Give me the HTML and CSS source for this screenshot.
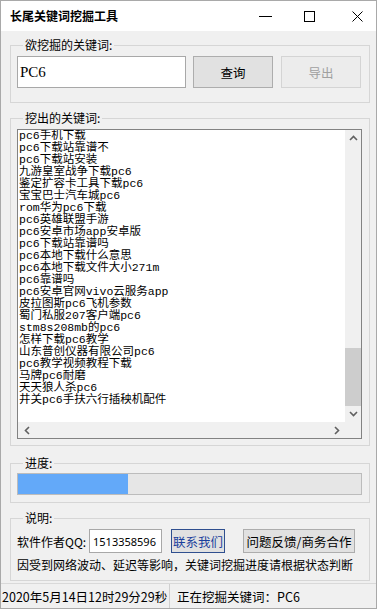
FILE: index.html
```html
<!DOCTYPE html>
<html lang="zh-CN">
<head>
<meta charset="utf-8">
<title>长尾关键词挖掘工具</title>
<link rel="stylesheet" href="styles.css">
</head>
<body>
<div class="window">
  <div class="titlebar">
    <span class="title">长尾关键词挖掘工具</span>
    <div class="controls">
      <svg class="ic-min" width="13" height="10" viewBox="0 0 13 10"><path d="M0 5.5H13" stroke="#000" stroke-width="1"/></svg>
      <svg class="ic-max" width="11" height="11" viewBox="0 0 11 11"><rect x="0.5" y="0.5" width="10" height="10" fill="none" stroke="#000" stroke-width="1"/></svg>
      <svg class="ic-close" width="11" height="11" viewBox="0 0 11 11"><path d="M0.5 0.5L10.5 10.5M10.5 0.5L0.5 10.5" stroke="#000" stroke-width="1"/></svg>
    </div>
  </div>

  <div class="content">
    <fieldset class="group g-query">
      <legend>欲挖掘的关键词:</legend>
      <div class="query-row">
        <div class="kw">PC6</div>
        <button class="btn btn-query">查询</button>
        <button class="btn btn-disabled">导出</button>
      </div>
    </fieldset>

    <fieldset class="group g-list">
      <legend>挖出的关键词:</legend>
      <div class="listbox">
        <div class="items">
          <div>pc6手机下载</div>
          <div>pc6下载站靠谱不</div>
          <div>pc6下载站安装</div>
          <div>九游皇室战争下载pc6</div>
          <div>鉴定扩容卡工具下载pc6</div>
          <div>宝宝巴士汽车城pc6</div>
          <div>rom华为pc6下载</div>
          <div>pc6英雄联盟手游</div>
          <div>pc6安卓市场app安卓版</div>
          <div>pc6下载站靠谱吗</div>
          <div>pc6本地下载什么意思</div>
          <div>pc6本地下载文件大小271m</div>
          <div>pc6靠谱吗</div>
          <div>pc6安卓官网vivo云服务app</div>
          <div>皮拉图斯pc6飞机参数</div>
          <div>蜀门私服207客户端pc6</div>
          <div>stm8s208mb的pc6</div>
          <div>怎样下载pc6教学</div>
          <div>山东普创仪器有限公司pc6</div>
          <div>pc6教学视频教程下载</div>
          <div>马牌pc6耐磨</div>
          <div>天天狼人杀pc6</div>
          <div>井关pc6手扶六行插秧机配件</div>
        </div>
        <div class="vscroll">
          <div class="sb-btn"><svg width="9" height="6" viewBox="0 0 9 6"><path d="M1 5L4.5 1.5L8 5" fill="none" stroke="#606060" stroke-width="1.6"/></svg></div>
          <div class="sb-space"></div>
          <div class="sb-thumb"></div>
          <div class="sb-btn"><svg width="9" height="6" viewBox="0 0 9 6"><path d="M1 1L4.5 4.5L8 1" fill="none" stroke="#606060" stroke-width="1.6"/></svg></div>
        </div>
        <div class="hscroll">
          <div class="sb-btn"><svg width="6" height="9" viewBox="0 0 6 9"><path d="M5 1L1.5 4.5L5 8" fill="none" stroke="#606060" stroke-width="1.6"/></svg></div>
          <div class="sb-btn"><svg width="6" height="9" viewBox="0 0 6 9"><path d="M1 1L4.5 4.5L1 8" fill="none" stroke="#606060" stroke-width="1.6"/></svg></div>
        </div>
        <div class="corner"></div>
      </div>
    </fieldset>

    <fieldset class="group g-progress">
      <legend>进度:</legend>
      <div class="progress"><div class="fill" style="width:32%"></div></div>
    </fieldset>

    <fieldset class="group g-info">
      <legend>说明:</legend>
      <div class="info-row">
        <span class="qq-label">软件作者QQ:</span>
        <div class="qq">1513358596</div>
        <button class="btn btn-contact">联系我们</button>
        <button class="btn btn-feedback">问题反馈/商务合作</button>
      </div>
      <div class="note">因受到网络波动、延迟等影响，关键词挖掘进度请根据状态判断</div>
    </fieldset>
  </div>

  <div class="statusbar">
    <div class="sb-cell sb-time">2020年5月14日12时29分29秒</div>
    <div class="sb-cell sb-state">正在挖掘关键词：PC6</div>
  </div>
</div>
</body>
</html>
```

FILE: styles.css
```css
* { box-sizing: border-box; }

body {
  margin: 0;
  font-family: "Noto Sans CJK SC", "Noto Sans", sans-serif;
  font-size: 12px;
  color: #000;
  background: #f0f0f0;
}

.window {
  width: 377px;
  height: 609px;
  border: 1px solid #a9a9a9;
  background: #f0f0f0;
  display: flex;
  flex-direction: column;
  overflow: hidden;
}

/* title bar */
.titlebar {
  height: 30px;
  flex-shrink: 0;
  background: #fff;
  display: flex;
  align-items: center;
  padding-left: 9px;
}
.title {
  font-size: 12px;
  font-weight: 700;
  line-height: 16px;
}
.controls {
  margin-left: auto;
  display: flex;
  align-items: center;
  padding-right: 13px;
}
.ic-min { margin-right: 32px; }
.ic-max { margin-right: 37px; }

/* content */
.content {
  padding: 7px 6px 0 9px;
  display: flex;
  flex-direction: column;
}

.group {
  margin: 0;
  min-width: 0;
  border: 1px solid #d6d6d6;
}
.group legend {
  margin-left: 6px;
  padding: 0 2px;
  font-size: 12px;
  line-height: 14px;
}

.g-query { padding: 4px 7px 14px 6px; }
.g-list { margin-top: 8px; padding: 4px 7px 6px 6px; }
.g-progress { margin-top: 10px; padding: 3px 7px 7px 6px; }
.g-info { margin-top: 8px; padding: 4px 7px 7px 6px; }

/* query row */
.query-row {
  display: flex;
  align-items: center;
}
.kw {
  width: 169px;
  height: 32px;
  border: 1px solid #a8a8a8;
  background: #fff;
  font-family: "Liberation Serif", serif;
  font-size: 15px;
  display: flex;
  align-items: center;
  padding-left: 2px;
}

.btn {
  font-family: "Noto Sans CJK SC", sans-serif;
  font-size: 12.5px;
  color: #000;
  background: #e1e1e1;
  border: 1px solid #adadad;
  padding: 0;
  margin: 0;
  white-space: nowrap;
  flex-shrink: 0;
}
.btn-query {
  width: 80px;
  height: 32px;
  margin-left: 7px;
}
.btn-disabled {
  width: 80px;
  height: 32px;
  margin-left: 8px;
  background: #ececec;
  border-color: #d4d4d4;
  color: #a0a0a0;
}

/* list box */
.listbox {
  height: 310px;
  border: 1px solid #828282;
  background: #fff;
  display: grid;
  grid-template-columns: 1fr 16px;
  grid-template-rows: 1fr 16px;
}
.items {
  padding: 0 0 0 1px;
  font-family: "Liberation Mono", "Noto Sans CJK SC", monospace;
  font-size: 11.5px;
  line-height: 12px;
  white-space: nowrap;
  overflow: hidden;
}
.vscroll {
  background: #f0f0f0;
  display: flex;
  flex-direction: column;
}
.sb-btn {
  width: 16px;
  height: 16px;
  display: flex;
  align-items: center;
  justify-content: center;
  flex-shrink: 0;
}
.sb-space { flex: 1; }
.sb-thumb {
  height: 58px;
  background: #cdcdcd;
}
.hscroll {
  background: #f0f0f0;
  display: flex;
  justify-content: space-between;
  padding: 0 0 0 1px;
}
.corner { background: #f0f0f0; }

/* progress */
.progress {
  height: 22px;
  border: 1px solid #bcbcbc;
  background: #e6e6e6;
}
.fill {
  height: 100%;
  background: #63a9f9;
}

/* info */
.info-row {
  display: flex;
  align-items: center;
  height: 24px;
}
.qq-label {
  font-size: 12px;
  width: 72px;
  white-space: nowrap;
  flex-shrink: 0;
}
.qq {
  width: 73px;
  height: 24px;
  flex-shrink: 0;
  border: 1px solid #a8a8a8;
  background: #fff;
  font-family: "Noto Sans", sans-serif;
  font-size: 11px;
  display: flex;
  align-items: center;
  padding-left: 3px;
}
.btn-contact {
  width: 54px;
  height: 24px;
  margin-left: 9px;
  border-color: #2f4f8f;
  color: #1a3e9c;
}
.btn-feedback {
  width: 112px;
  height: 24px;
  margin-left: 18px;
}
.note {
  margin-top: 4px;
  font-size: 12px;
  line-height: 16px;
  white-space: nowrap;
}

/* status bar */
.statusbar {
  flex: 1;
  margin-top: 2px;
  border-top: 1px solid #d9d9d9;
  display: flex;
  align-items: center;
  font-size: 12.5px;
}
.sb-cell { line-height: 26px; white-space: nowrap; }
.sb-time {
  width: 169px;
  padding-left: 1px;
  border-right: 1px solid #cfcfcf;
}
.sb-state { padding-left: 7px; }
```
